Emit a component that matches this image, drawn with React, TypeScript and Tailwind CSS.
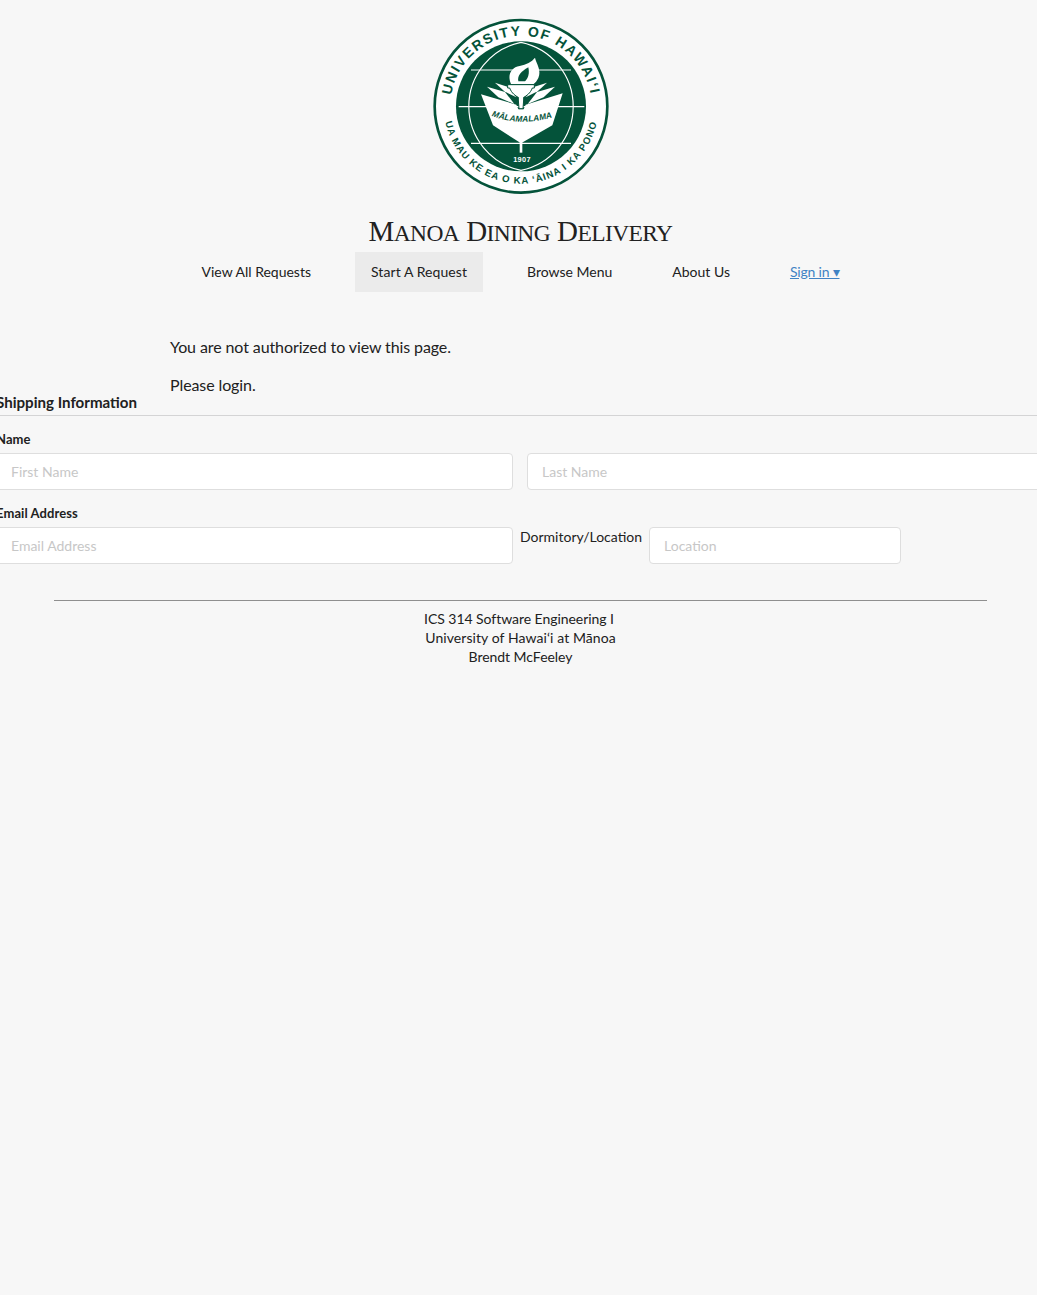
import React from 'react';

const GREEN = '#04533a';

const Seal: React.FC = () => (
  <svg viewBox="0 0 600 585" className="block h-[195px] w-[200px]">
    <defs>
      <path id="topArc" d="M 92 330 A 212 212 0 1 1 508 330" />
      <path id="bottomArc" d="M 73 337 A 232 232 0 0 0 527 337" />
      <path id="bookWave" d="M 206 316 Q 300 352 400 320" />
      <clipPath id="disc">
        <circle cx="300" cy="289" r="195" />
      </clipPath>
    </defs>
    <circle cx="300" cy="289" r="259" fill="#fff" stroke={GREEN} strokeWidth="8" />
    <circle cx="300" cy="289" r="195" fill={GREEN} />
    <g clipPath="url(#disc)" fill="none" stroke="#fff" strokeWidth="3.5">
      <path d="M 300 97 A 196 196 0 0 0 300 481 A 196 196 0 0 0 300 97" />
      <path d="M 150 180 H 450 M 113 290 H 490 M 150 400 H 450" />
    </g>
    <path d="M 300 375 V 428" stroke="#fff" strokeWidth="8" />
    {/* leaves */}
    <g fill="#fff">
      <path d="M 198 230 L 252 246 L 280 282 L 232 262 Z" />
      <path d="M 222 218 L 264 232 L 286 262 L 250 244 Z" />
      <path d="M 402 230 L 348 246 L 320 282 L 368 262 Z" />
      <path d="M 378 218 L 336 232 L 314 262 L 350 244 Z" />
      {/* book */}
      <path d="M 180 253 L 286 284 L 292 298 H 308 L 314 284 L 425 250 L 394 346 L 300 400 L 216 346 Z" />
      {/* flame */}
      <path d="M 270 222 C 258 196 270 172 296 168 C 316 164 332 156 342 143 C 346 160 362 180 352 204 C 348 212 344 218 338 222 Z" />
    </g>
    <path d="M 292 214 C 288 198 300 184 322 172 C 326 190 322 204 312 214 Z" fill={GREEN} />
    {/* torch */}
    <path d="M 260 224 H 340 V 234 H 334 C 328 250 316 258 308 262 V 270 L 306 296 H 294 L 292 270 V 262 C 284 258 272 250 266 234 H 260 Z" fill="#fff" stroke={GREEN} strokeWidth="3" />
    <text fontFamily="'Liberation Sans', sans-serif" fontStyle="italic" fontWeight="700" fontSize="25" fill={GREEN} letterSpacing="0.3">
      <textPath href="#bookWave" startOffset="50%" textAnchor="middle">MĀLAMALAMA</textPath>
    </text>
    <text x="303" y="455" textAnchor="middle" fontFamily="'Liberation Sans', sans-serif" fontWeight="700" fontSize="22" fill="#fff" letterSpacing="1">
      1907
    </text>
    <text fontFamily="'Liberation Sans', sans-serif" fontWeight="700" fontSize="42" fill={GREEN} letterSpacing="5">
      <textPath href="#topArc" startOffset="50%" textAnchor="middle">UNIVERSITY OF HAWAI‘I</textPath>
    </text>
    <text fontFamily="'Liberation Sans', sans-serif" fontWeight="700" fontSize="29" fill={GREEN} letterSpacing="3">
      <textPath href="#bottomArc" startOffset="50%" textAnchor="middle">UA MAU KE EA O KA ‘ĀINA I KA PONO</textPath>
    </text>
  </svg>
);

const inputClass =
  'h-[37px] rounded-[4px] border border-[#dedede] bg-white px-[14px] text-[14px] outline-none placeholder:text-[#c7c7c7]';

const TitleWord: React.FC<{ cap: string; rest: string }> = ({ cap, rest }) => (
  <span>
    <span className="text-[29px]">{cap}</span>
    {rest}
  </span>
);

const App: React.FC = () => {
  const navItems = ['View All Requests', 'Start A Request', 'Browse Menu', 'About Us'];

  return (
    <div className="min-h-[1295px] w-full overflow-hidden bg-[#f7f7f7] font-['Lato',sans-serif] text-[14px] text-[#212121]">
      <div className="w-[1041px]">
        {/* Header */}
        <div className="flex flex-col items-center pt-[10px]">
          <Seal />
          <h1 className="mt-[9px] flex h-[37px] gap-[7px] font-['Liberation_Serif',serif] text-[23.5px] leading-[35px] font-normal tracking-[-0.6px] uppercase">
            <TitleWord cap="M" rest="anoa" />
            <TitleWord cap="D" rest="ining" />
            <TitleWord cap="D" rest="elivery" />
          </h1>
          <nav className="mt-[1px] flex h-[40px] items-center gap-[28px]">
            {navItems.map((item) => (
              <a
                key={item}
                className={`flex h-[40px] items-center px-[16px] pb-[2px] ${item === 'Start A Request' ? 'bg-[#ebebeb] tracking-[0.07px]' : ''}`}
              >
                {item}
              </a>
            ))}
            <a className="flex h-[40px] items-center px-[16px] pb-[2px] tracking-[-0.2px] text-[#4183c4] underline">Sign in ▾</a>
          </nav>
        </div>

        {/* Not authorized message */}
        <div className="mt-[43px] pl-[170px] text-[16px] leading-[23px] tracking-[-0.1px]">
          <p>You are not authorized to view this page.</p>
          <p className="mt-[15px]">Please login.</p>
        </div>

        {/* Form */}
        <form className="-ml-[4px] -mt-[5px] w-[1048px]">
          <h4 className="h-[23px] text-[15.1px] leading-[23px] font-bold">Shipping Information</h4>
          <div className="mt-[1px] border-t border-[#d4d4d5]" />
          <label className="mt-[14px] block text-[13px] leading-[19px] font-bold tracking-[0.08px]">Name</label>
          <div className="mt-[4px] flex gap-[14px]">
            <input className={`${inputClass} w-[517px]`} placeholder="First Name" />
            <input className={`${inputClass} w-[517px]`} placeholder="Last Name" />
          </div>
          <label className="mt-[14px] block text-[13px] leading-[19px] font-bold tracking-[0.08px]">Email Address</label>
          <div className="mt-[4px] flex">
            <input className={`${inputClass} w-[517px]`} placeholder="Email Address" />
            <label className="ml-[7px] leading-[19px] whitespace-nowrap">Dormitory/Location</label>
            <input className={`${inputClass} ml-[7px] w-[252px]`} placeholder="Location" />
          </div>
        </form>

        {/* Footer */}
        <footer className="mx-[54px] mt-[36px] border-t border-[#8f8f8f] pt-[8px] text-center leading-[19px]">
          <div className="pr-[3px] tracking-[-0.05px]">ICS 314 Software Engineering I</div>
          <div className="tracking-[0.08px]">University of Hawai‘i at Mānoa</div>
          <div className="tracking-[-0.05px]">Brendt McFeeley</div>
        </footer>
      </div>
    </div>
  );
};

export default App;
